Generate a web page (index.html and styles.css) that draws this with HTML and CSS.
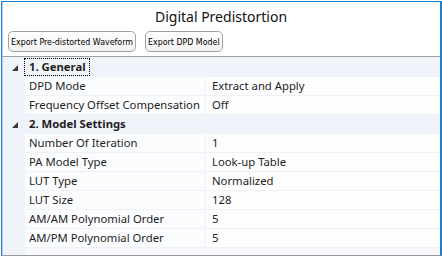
FILE: index.html
```html
<!DOCTYPE html>
<html>

<head>
    <meta charset="UTF-8">
    <title>Digital Predistortion</title>
    <link rel="stylesheet" href="styles.css">
</head>

<body>
    <div class="window">
        <div class="title">Digital Predistortion</div>

        <div class="toolbar">
            <button class="btn">Export Pre-distorted Waveform</button>
            <button class="btn">Export DPD Model</button>
        </div>

        <div class="grid">
            <div class="row category">
                <span class="gutter"><svg class="expander" width="6" height="6" viewBox="0 0 6 6"><polygon points="0,6 6,6 6,0" /></svg></span>
                <span class="cat-name"><span class="focus">1. General</span></span>
            </div>
            <div class="row">
                <span class="gutter"></span>
                <span class="name">DPD Mode</span>
                <span class="value">Extract and Apply</span>
            </div>
            <div class="row">
                <span class="gutter"></span>
                <span class="name">Frequency Offset Compensation</span>
                <span class="value">Off</span>
            </div>

            <div class="row category">
                <span class="gutter"><svg class="expander" width="6" height="6" viewBox="0 0 6 6"><polygon points="0,6 6,6 6,0" /></svg></span>
                <span class="cat-name"><span class="plain">2. Model Settings</span></span>
            </div>
            <div class="row">
                <span class="gutter"></span>
                <span class="name">Number Of Iteration</span>
                <span class="value">1</span>
            </div>
            <div class="row">
                <span class="gutter"></span>
                <span class="name">PA Model Type</span>
                <span class="value">Look-up Table</span>
            </div>
            <div class="row">
                <span class="gutter"></span>
                <span class="name">LUT Type</span>
                <span class="value">Normalized</span>
            </div>
            <div class="row">
                <span class="gutter"></span>
                <span class="name">LUT Size</span>
                <span class="value">128</span>
            </div>
            <div class="row">
                <span class="gutter"></span>
                <span class="name">AM/AM Polynomial Order</span>
                <span class="value">5</span>
            </div>
            <div class="row">
                <span class="gutter"></span>
                <span class="name">AM/PM Polynomial Order</span>
                <span class="value">5</span>
            </div>
            <div class="row filler">
                <span class="gutter"></span>
                <span class="rest"></span>
            </div>
        </div>
    </div>
</body>

</html>
```

FILE: styles.css
```css
* {
    margin: 0;
    padding: 0;
    box-sizing: border-box;
}

body {
    background-color: #ffffff;
    font-family: "Noto Sans", "Open Sans", sans-serif;
    color: #1e1e1e;
}

.window {
    margin: 1px 0 0 1px;
    width: 441px;
    height: 255px;
    border-top: 1px solid #1b7fd3;
    border-left: 1px solid #2a86d6;
    border-right: 2px solid #1b7fd3;
    border-bottom: 1px solid #9a9a9a;
    box-shadow: inset 1px 0 0 #a9cdee;
    display: flex;
    flex-direction: column;
}

.title {
    height: 29px;
    padding-top: 5px;
    text-align: center;
    font-size: 14px;
    line-height: 19px;
    color: #111111;
}

.toolbar {
    display: flex;
    gap: 9px;
    padding-left: 6px;
    height: 25px;
}

.btn {
    height: 21px;
    padding: 0 2px;
    border: 1px solid #a3a3a3;
    border-radius: 5px;
    background: linear-gradient(#ffffff, #f1f1f1);
    font-family: "DejaVu Sans Condensed", "DejaVu Sans", sans-serif;
    font-stretch: condensed;
    font-size: 8.8px;
    color: #000000;
}

.grid {
    flex: 1;
    margin-left: 1px;
    border-top: 1px solid #a0a0a0;
    padding-top: 1px;
    display: flex;
    flex-direction: column;
    background-color: #f0f4fa;
    font-size: 11.3px;
}

.row {
    display: flex;
    height: 19px;
    line-height: 18px;
}

.gutter {
    width: 22px;
    flex-shrink: 0;
    display: flex;
    align-items: center;
    justify-content: center;
    background-color: #f0f4fa;
}

.expander {
    fill: #3a3a3a;
    margin-left: 1px;
}

.name {
    width: 181px;
    padding-left: 4px;
    background-color: #fbfcfe;
    border-bottom: 1px solid #eef2f8;
    border-right: 1px solid #eef2f8;
    white-space: nowrap;
}

.value {
    flex: 1;
    padding-left: 6px;
    background-color: #fdfdfe;
    border-bottom: 1px solid #eef2f8;
}

.category {
    font-weight: bold;
    background-color: #f0f4fa;
}

.focus {
    display: inline-block;
    padding: 0 3px 0 4px;
    outline: 1px dotted #000000;
    line-height: 16px;
    margin-top: 1px;
}

.plain {
    display: inline-block;
    padding-left: 4px;
}

.filler {
    flex: 1;
}

.rest {
    flex: 1;
    background-color: #f7f8fb;
}
```
